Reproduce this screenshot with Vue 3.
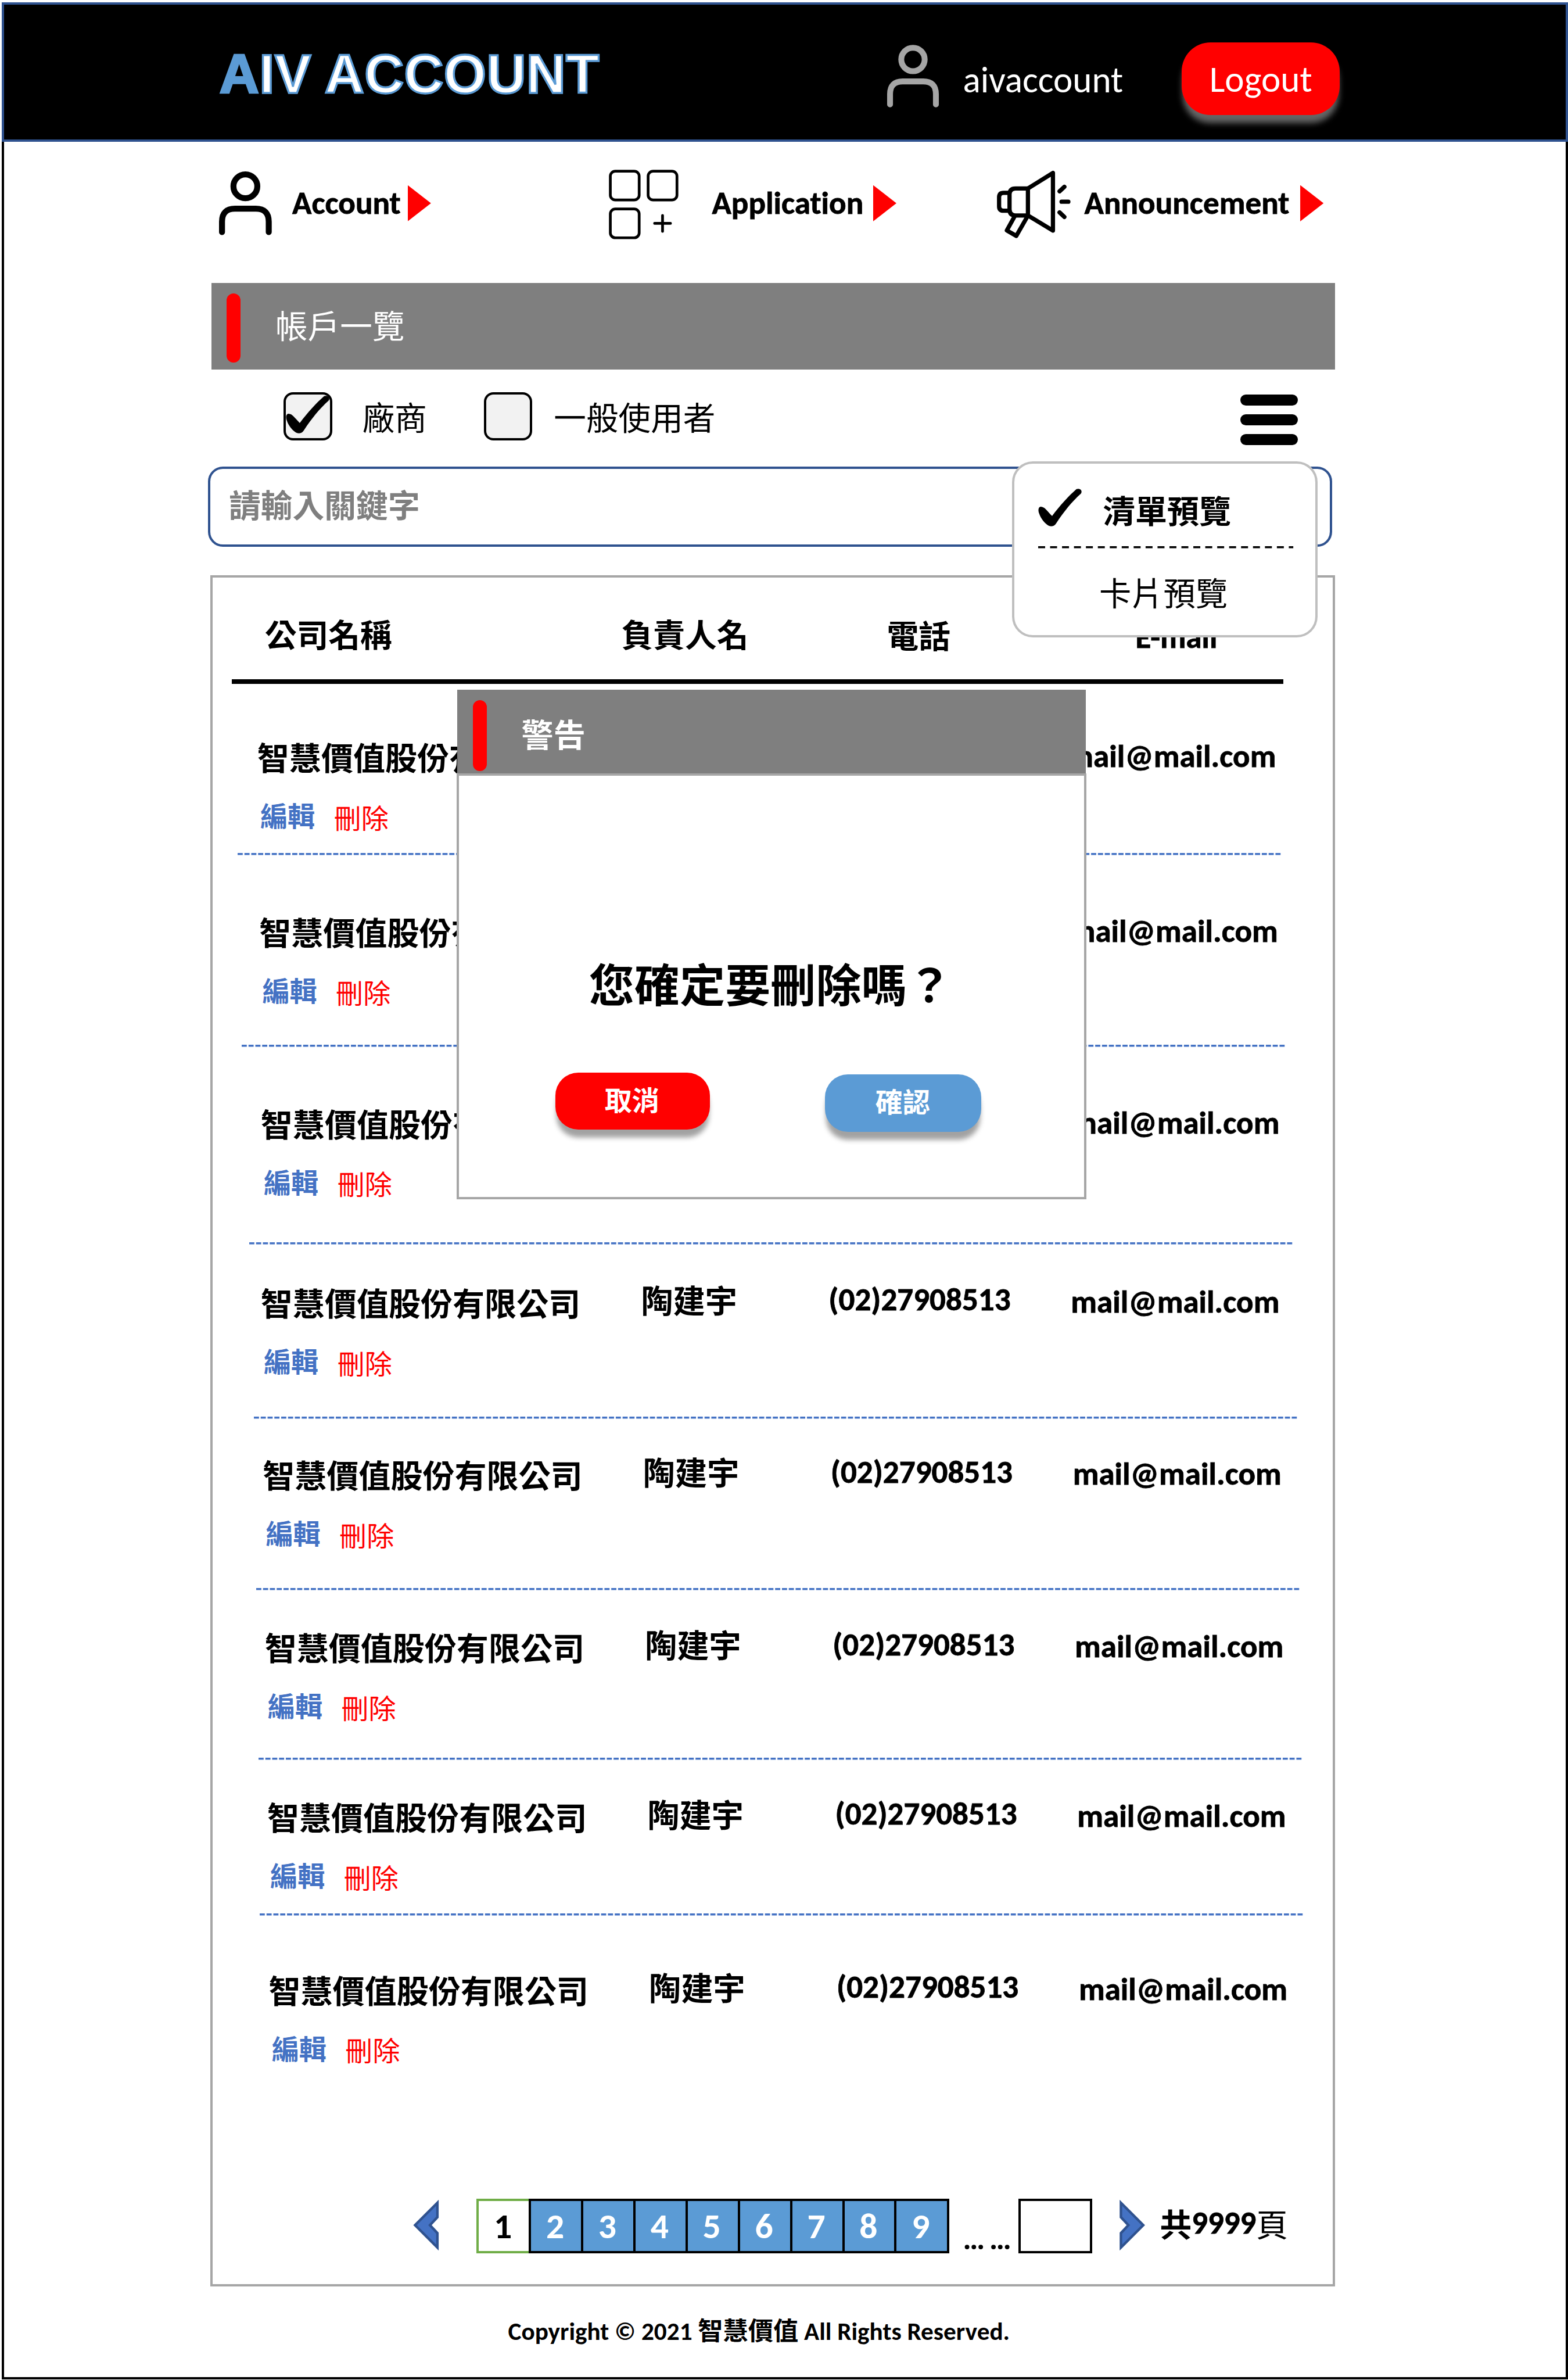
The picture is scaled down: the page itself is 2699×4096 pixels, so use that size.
<script setup>
const nav = [
  { key: 'account', label: 'Account' },
  { key: 'application', label: 'Application' },
  { key: 'announcement', label: 'Announcement' },
]

const rows = [
  { h: 344, top: 107, x: 90, line: 50 },
  { h: 385, top: 115, x: 94, line: 59 },
  { h: 398, top: 115, x: 97, line: 74 },
  { h: 350, top: 77, x: 97, line: 83 },
  { h: 345, top: 73, x: 101, line: 88 },
  { h: 341, top: 75, x: 105, line: 92 },
  { h: 313, top: 75, x: 110, line: 95 },
  { h: 300, top: 110, x: 113, line: null },
]

const pages = [1, 2, 3, 4, 5, 6, 7, 8, 9]
</script>

<template>
  <div class="page">
    <header class="top">
      <div class="logo"><span>A</span>IV ACCOUNT</div>
      <svg class="me" viewBox="0 0 106 128" fill="none" stroke="#a5a5a5" stroke-width="12" stroke-linecap="round">
        <circle cx="53" cy="30" r="24" />
        <path d="M6 122V101Q6 75 32 75H74Q100 75 100 101V122" />
      </svg>
      <span class="user">aivaccount</span>
      <button class="logout">Logout</button>
    </header>

    <nav class="nav">
      <a v-for="n in nav" :key="n.key" :class="n.key">
        <svg v-if="n.key === 'account'" width="106" height="128" viewBox="0 0 106 128" fill="none" stroke="#000" stroke-width="12" stroke-linecap="round">
          <circle cx="53" cy="30" r="24" />
          <path d="M6 122V101Q6 75 32 75H74Q100 75 100 101V122" />
        </svg>
        <svg v-else-if="n.key === 'application'" width="140" height="140" viewBox="0 0 140 140" fill="none" stroke="#000" stroke-width="5.5" stroke-linecap="round">
          <rect x="3" y="3" width="58" height="58" rx="10" />
          <rect x="79" y="3" width="58" height="58" rx="10" />
          <rect x="3" y="79" width="58" height="58" rx="10" />
          <path d="M92 108H124M108 92V124" />
        </svg>
        <svg v-else width="150" height="138" viewBox="0 0 150 138" fill="none" stroke="#000" stroke-width="8.5" stroke-linecap="round" stroke-linejoin="round">
          <path d="M64.7 36.7L115 5.3V121.3L64.7 91" />
          <path d="M64.7 36.7V91H39.7Q27.7 91 27.7 79V48.7Q27.7 36.7 39.7 36.7Z" />
          <path d="M27.7 45.3H15.7Q6.7 45.3 6.7 54.3V72.3Q6.7 81.3 15.7 81.3H27.7" />
          <path d="M38 92.7L22.3 121L41.3 132L63 94" />
          <path d="M138 33.3L128.3 42.3M132.3 63.3H146M128.3 84.7L138 94" />
        </svg>
        <span class="label">{{ n.label }}</span>
        <i class="tri"></i>
      </a>
    </nav>

    <main>
      <div class="bar"><i class="pill"></i><h1>帳戶一覽</h1></div>

      <div class="filters">
        <span class="box">
          <svg width="88" height="76" viewBox="0 0 88 76"><path d="M3 37C0 39 0 45 2 50C6 62 14 70 20 74C25 77 32 76 36 70C52 46 68 26 86 10C90 4 84-2 77 1C60 16 44 34 28 55C20 47 14 38 9 37C6 36 4 36 3 37Z" /></svg>
        </span>
        <span class="vendor">廠商</span>
        <span class="box"></span>
        <span class="general">一般使用者</span>
        <div class="burger"><i></i><i></i><i></i></div>
      </div>

      <div class="search">請輸入關鍵字</div>

      <section class="panel">
        <div class="head">
          <span>公司名稱</span><span>負責人名</span><span class="tel">電話</span><span class="em">E-mail</span>
        </div>
        <div class="rule"></div>
        <div v-for="(r, i) in rows" :key="i" class="row" :style="{ height: r.h + 'px', paddingTop: r.top + 'px' }">
          <div class="cells" :style="{ marginLeft: r.x + 'px' }">
            <span>智慧價值股份有限公司</span>
            <span class="person">陶建宇</span>
            <span class="phone">(02)27908513</span>
            <span class="mail">mail@mail.com</span>
          </div>
          <div class="ops" :style="{ marginLeft: r.x + 6 + 'px' }">
            <b>編輯</b><span>刪除</span>
          </div>
          <svg v-if="r.line !== null" class="dash" :style="{ marginLeft: r.line + 'px' }" width="2098" height="4">
            <path d="M0 2H2098" stroke="#4472c4" stroke-width="4" stroke-dasharray="10.3 3.43" />
          </svg>
        </div>

        <div class="pager">
          <svg width="53" height="104" viewBox="0 0 53 104"><path d="M49 7L4 52L49 97V68L34 52L49 36Z" fill="#4472c4" stroke="#2f528f" stroke-width="5" /></svg>
          <div class="pages">
            <span v-for="p in pages" :key="p" :class="{ on: p === 1 }">{{ p }}</span>
          </div>
          <span class="dots">… …</span>
          <span class="jump"></span>
          <svg width="53" height="104" viewBox="0 0 53 104"><path d="M4 7L49 52L4 97V68L19 52L4 36Z" fill="#4472c4" stroke="#2f528f" stroke-width="5" /></svg>
          <span class="total"><b>共</b><b class="num">9999</b>頁</span>
        </div>
      </section>

      <div class="menu">
        <div class="item chosen">
          <svg width="88" height="76" viewBox="0 0 88 76"><path d="M3 37C0 39 0 45 2 50C6 62 14 70 20 74C25 77 32 76 36 70C52 46 68 26 86 10C90 4 84-2 77 1C60 16 44 34 28 55C20 47 14 38 9 37C6 36 4 36 3 37Z" /></svg>
          <b>清單預覽</b>
        </div>
        <svg class="split" width="513" height="4"><path d="M0 2H513" stroke="#000" stroke-width="4" stroke-dasharray="14 10" /></svg>
        <div class="item other">卡片預覽</div>
      </div>

      <div class="modal">
        <div class="mhead"><i class="pill"></i><b>警告</b></div>
        <div class="mbody">
          <p>您確定要刪除嗎？</p>
          <div class="btns">
            <button class="cancel">取消</button>
            <button class="ok">確認</button>
          </div>
        </div>
      </div>
    </main>

    <footer>Copyright © 2021 <span>智慧價值</span> All Rights Reserved.</footer>
  </div>
</template>

<style>
body {
  margin: 0;
  background: #fff;
  overflow: hidden;
}
</style>

<style scoped>
* {
  box-sizing: border-box;
}
.page {
  zoom: 0.856;
  width: 3149px;
  height: 4779px;
  margin: 5px 0 0 4px;
  border: 5px solid #000;
  font-family: "Noto Sans CJK TC", sans-serif;
  font-size: 64.3px;
  font-variant-ligatures: none;
  line-height: 76px;
  color: #000;
  white-space: nowrap;
}
svg {
  display: block;
  flex: none;
  overflow: visible;
}
button {
  border: 0;
  padding: 0;
  font: inherit;
  color: #fff;
}
.user, .logout, .label, .em, .phone, .mail, .pages, .dots, .num, footer {
  font-family: Carlito, Lato, "Noto Sans CJK TC", sans-serif;
}
.label, .em, .phone, .mail, .num {
  -webkit-text-stroke: 0.9px currentColor;
}
.top {
  height: 280px;
  margin: -5px -5px 0;
  border: 5px solid #2f528f;
  background: #000;
  display: flex;
  align-items: flex-start;
}
.logo {
  width: 1339px;
  margin: 77px 0 0 433px;
  font: bold 110px/126px "Liberation Sans", Arial, sans-serif;
  letter-spacing: 0.4px;
  color: #fff;
  -webkit-text-stroke: 4px #5b9bd5;
}
.logo span {
  color: #5b9bd5;
}
.me {
  width: 104px;
  height: 126px;
  margin: 81px 0 0 3px;
}
.user {
  width: 440px;
  margin: 107px 0 0 49px;
  font-size: 73.8px;
  line-height: 88px;
  color: #fff;
}
.logout {
  width: 318px;
  height: 146px;
  margin: 76px 0 0;
  padding-top: 2px;
  border-radius: 58px;
  background: #f00;
  font-size: 73.8px;
  box-shadow: 0 18px 12px -2px #666;
}
.nav {
  display: flex;
  height: 284px;
  padding-bottom: 36px;
}
.nav a {
  display: flex;
  align-items: center;
}
.account {
  margin-left: 432px;
}
.account .label {
  width: 232px;
  margin-left: 41px;
}
.application {
  margin-left: 358px;
}
.application svg {
  margin-top: 5px;
}
.application .label {
  width: 324px;
  margin-left: 67px;
}
.announcement {
  margin-left: 200px;
}
.announcement svg {
  margin-top: 6px;
}
.announcement .label {
  width: 434px;
  margin-left: 28px;
}
.label {
  font-size: 64.4px;
  font-weight: bold;
}
.tri {
  width: 47px;
  height: 73px;
  background: #f00;
  clip-path: polygon(0 0, 100% 50%, 0 100%);
}
main {
  position: relative;
  width: 2262px;
  margin-left: 414px;
}
.bar {
  display: flex;
  align-items: center;
  height: 174px;
  margin-left: 2px;
  background: #7f7f7f;
}
.pill {
  width: 28px;
  height: 139px;
  margin-left: 31px;
  border-radius: 14px;
  background: #f00;
}
.bar .pill {
  margin-top: 7px;
}
h1 {
  margin: -8px 0 0 70px;
  font-size: 65px;
  font-weight: 400;
  color: #fff;
}
.filters {
  display: flex;
  align-items: center;
  height: 195px;
  padding: 0 75px 7px 148px;
  font-size: 65px;
}
.box {
  width: 97px;
  height: 97px;
  border: 5px solid #000;
  border-radius: 19px;
  background: #f2f2f2;
}
.box svg {
  margin-top: 3px;
}
.vendor {
  width: 245px;
  margin: -2px 0 0 61px;
}
.general {
  margin: -2px 0 0 43px;
  flex: 1;
}
.burger {
  display: flex;
  flex-direction: column;
  gap: 18px;
  width: 116px;
  margin-top: 15px;
}
.burger i {
  height: 22px;
  border-radius: 11px;
  background: #000;
}
.search {
  height: 162px;
  margin: 0 6px 57px -4px;
  padding: 32px 0 0 37px;
  border: 5px solid #2f528f;
  border-radius: 30px;
  font-size: 64px;
  font-weight: bold;
  color: #7f7f7f;
}
.panel {
  height: 3440px;
  border: 5px solid #a6a6a6;
}
.head {
  display: grid;
  grid-template-columns: 717px 534px 500px auto;
  height: 204px;
  padding: 73px 0 0 105px;
  font-size: 64px;
  font-weight: bold;
}
.tel {
  margin-top: 3px;
}
.em {
  margin-top: 9px;
}
.rule {
  width: 2114px;
  height: 10px;
  margin-left: 39px;
  background: #000;
}
.row {
  display: flex;
  flex-direction: column;
}
.cells {
  display: grid;
  grid-template-columns: 765px 377px 487px auto;
  font-weight: bold;
}
.person {
  margin-top: -6px;
}
.phone {
  margin-top: -4px;
}
.mail {
  margin-top: 0;
}
.ops {
  display: flex;
  margin-top: 47px;
  font-size: 55px;
  line-height: 66px;
  color: #f00;
}
.ops b {
  width: 148px;
  color: #4472c4;
}
.ops span {
  padding-top: 4px;
}
.dash {
  margin-top: auto;
}
.pager {
  display: flex;
  align-items: flex-start;
  margin: 269px 0 0 403px;
}
.pager > svg {
  margin-top: 2px;
}
.pages {
  display: flex;
  width: 953px;
  margin-left: 75px;
}
.pages span {
  flex: none;
  width: 110px;
  height: 110px;
  margin-right: -5px;
  border: 5px solid #000;
  background: #5b9bd5;
  color: #fff;
  font-size: 72px;
  font-weight: bold;
  line-height: 102px;
  padding-right: 4px;
  text-align: center;
}
.pages .on {
  border-color: #70ad47;
  background: #fff;
  color: #000;
}
.dots {
  width: 112px;
  margin: 43px 0 0 25px;
  font-weight: bold;
  font-size: 62px;
  word-spacing: -5px;
}
.jump {
  width: 148px;
  height: 110px;
  border: 5px solid #000;
  margin-right: 54px;
}
.total {
  display: flex;
  margin: 11px 0 0 29px;
  font-size: 64px;
}
.menu {
  position: absolute;
  left: 1612px;
  top: 359px;
  width: 615px;
  height: 354px;
  border: 5px solid #bfbfbf;
  border-radius: 42px;
  background: #fff;
}
.item {
  display: flex;
}
.chosen {
  margin: 50px 0 0 48px;
  height: 116px;
}
.chosen b {
  margin: 4px 0 0 43px;
}
.split {
  margin-left: 48px;
}
.other {
  margin: 50px 0 0 171px;
  font-size: 64.6px;
}
.modal {
  position: absolute;
  left: 496px;
  top: 818px;
  width: 1266px;
  height: 1025px;
}
.mhead {
  display: flex;
  height: 171px;
  margin: 0 1px;
  padding-top: 21px;
  background: #7f7f7f;
  color: #fff;
}
.mhead .pill {
  height: 143px;
}
.mhead b {
  margin: 28px 0 0 70px;
}
.mbody {
  height: 857px;
  margin-top: -3px;
  border: 5px solid #a6a6a6;
  background: #fff;
}
p {
  margin: 367px 0 0 261px;
  font-size: 91.3px;
  line-height: 100px;
  font-weight: bold;
}
.btns {
  display: flex;
  margin: 130px 0 0 193px;
}
.btns button {
  width: 311px;
  height: 115px;
  border-radius: 46px;
  font-size: 55px;
  font-weight: bold;
  line-height: 105px;
  padding: 0 2px 12px 0;
  box-shadow: 0 18px 10px -2px #a2a2a2;
}
.cancel {
  background: #f00;
}
.btns .ok {
  width: 314px;
  margin: 4px 0 0 232px;
  background: #5b9bd5;
}
footer {
  margin: 53px 0 0 1013px;
  font-size: 50.5px;
  font-weight: bold;
}
</style>
